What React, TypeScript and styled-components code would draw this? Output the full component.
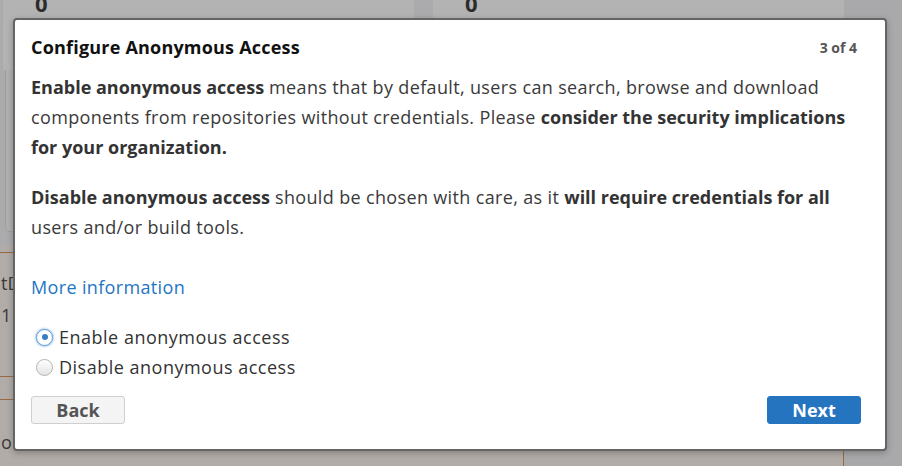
import styled, { createGlobalStyle } from 'styled-components';
import { useState } from 'react';

const GlobalStyle = createGlobalStyle`
  html, body {
    margin: 0;
    padding: 0;
    width: 902px;
    height: 466px;
    overflow: hidden;
  }
  body {
    font-family: "Open Sans", Lato, sans-serif;
    background: #a9a9ab;
  }
`;

const App = () => {
  const [anonymous, setAnonymous] = useState(true);

  return (
    <>
      <GlobalStyle />
      <Page>
        <Main>
          <TopArea>
            <StatRow>
              <StatCard>0</StatCard>
              <StatCard>0</StatCard>
            </StatRow>
            <OutlineCard />
          </TopArea>
          <TableArea>
            <TableRow height="124px">
              <Cell>tDate</Cell>
              <Cell>1</Cell>
            </TableRow>
            <TableRow height="23px" />
            <TableRow height="60px" last>
              <Cell>o</Cell>
            </TableRow>
          </TableArea>
        </Main>
        <SideStrip />
      </Page>

      <Modal>
        <Header>
          <Title>Configure Anonymous Access</Title>
          <Step>3 of 4</Step>
        </Header>
        <Body>
          <Paragraph>
            <b>Enable anonymous access</b> means that by default, users can
            search, browse and download components from repositories without
            credentials. Please{' '}
            <b>consider the security implications for your organization.</b>
          </Paragraph>
          <Paragraph gap="20px">
            <b>Disable anonymous access</b> should be chosen with care, as it{' '}
            <b>will require credentials for all</b> users and/or build tools.
          </Paragraph>
          <MoreLink href="#">More information</MoreLink>
          <RadioGroup>
            <RadioLabel>
              <RadioInput
                type="radio"
                name="anon"
                checked={anonymous}
                onChange={() => setAnonymous(true)}
              />
              Enable anonymous access
            </RadioLabel>
            <RadioLabel>
              <RadioInput
                type="radio"
                name="anon"
                checked={!anonymous}
                onChange={() => setAnonymous(false)}
              />
              Disable anonymous access
            </RadioLabel>
          </RadioGroup>
        </Body>
        <Footer>
          <Button>Back</Button>
          <Button primary>Next</Button>
        </Footer>
      </Modal>
    </>
  );
};

// 뒤 배경 (이미 어둡게 깔린 색)
const Page = styled.div`
  display: flex;
  width: 902px;
  height: 466px;
`;

const Main = styled.div`
  width: 844px;
  display: flex;
  flex-direction: column;
`;

const TopArea = styled.div`
  height: 245px;
  background: #ababad;
  padding-left: 3px;
  box-sizing: border-box;
`;

const StatRow = styled.div`
  display: flex;
  gap: 19px;
  height: 70px;
`;

const StatCard = styled.div`
  width: 411px;
  background: #b3b3b3;
  font-family: "Open Sans", sans-serif;
  font-weight: bold;
  font-size: 22px;
  color: #2b2b2b;
  line-height: 1;
  margin-top: -8px;
  padding-left: 32px;
  box-sizing: border-box;
`;

const OutlineCard = styled.div`
  margin: -29px 0 0 2px;
  height: 189px;
  width: 400px;
  border: 1px solid #9e9e9e;
  border-radius: 5px;
  background: #b0b0b0;
`;

const TableArea = styled.div`
  flex: 1;
  background: #b1aca8;
  padding-top: 7px;
  display: flex;
  flex-direction: column;
  border-right: 1px solid #9a6a3f;
`;

const TableRow = styled.div<{ height?: string; last?: boolean }>`
  height: ${({ height }) => height || '30px'};
  border-top: 1px solid #9a6a3f;
  display: flex;
  flex-direction: column;
  padding-top: 20px;
  box-sizing: border-box;
  gap: 12px;
  ${({ last }) => (last ? 'padding-top: 32px;' : '')}
`;

const Cell = styled.div`
  font-family: "Open Sans", sans-serif;
  font-size: 18px;
  color: #3a3a3a;
  line-height: 20px;
  padding-left: 1px;
`;

const SideStrip = styled.div`
  flex: 1;
  background: #a9a9ab;
`;

// 모달
const Modal = styled.div`
  position: absolute;
  left: 13px;
  top: 18px;
  width: 874px;
  height: 433px;
  box-sizing: border-box;
  background: #fff;
  border: 2px solid #656565;
  border-radius: 4px;
  box-shadow: 0 2px 6px rgba(0, 0, 0, 0.25);
  padding: 14px 24px 0 16px;
  display: flex;
  flex-direction: column;
  color: #333;
  letter-spacing: 0.35px;
`;

const Header = styled.div`
  display: flex;
  align-items: center;
  justify-content: space-between;
  height: 26px;
`;

const Title = styled.h1`
  margin: 0;
  font-size: 18px;
  font-weight: bold;
  color: #111;
  line-height: 26px;
  letter-spacing: 0.2px;
`;

const Step = styled.span`
  font-size: 14px;
  font-weight: bold;
  color: #555;
  margin-right: 4px;
  letter-spacing: 0;
`;

const Body = styled.div`
  display: flex;
  flex-direction: column;
  margin-top: 12px;
`;

const Paragraph = styled.p<{ gap?: string }>`
  margin: ${({ gap }) => gap || '0'} 0 0 0;
  font-size: 18px;
  line-height: 30px;
  color: #3a3a3a;
  b {
    color: #333;
    letter-spacing: 0;
  }
`;

const MoreLink = styled.a`
  margin-top: 30px;
  font-size: 18px;
  line-height: 30px;
  color: #2476c3;
  text-decoration: none;
  align-self: flex-start;
`;

const RadioGroup = styled.div`
  display: flex;
  flex-direction: column;
  margin-top: 20px;
`;

const RadioLabel = styled.label`
  display: flex;
  align-items: center;
  gap: 6px;
  font-size: 18px;
  line-height: 30px;
  color: #333;
  padding-left: 5px;
  letter-spacing: 0.5px;
`;

const RadioInput = styled.input`
  appearance: none;
  margin: 0;
  width: 17px;
  height: 17px;
  border-radius: 50%;
  border: 1px solid #b4b4b4;
  background: linear-gradient(#ffffff, #e4e4e4);
  box-sizing: border-box;
  position: relative;

  &:checked {
    border-color: #5b9ad8;
    background: #fff;
    box-shadow: 0 0 2px 1px rgba(91, 154, 216, 0.45);
  }
  &:checked::after {
    content: '';
    position: absolute;
    left: 4.5px;
    top: 4.5px;
    width: 6px;
    height: 6px;
    border-radius: 50%;
    background: #3a7cc4;
  }
`;

const Footer = styled.div`
  display: flex;
  justify-content: space-between;
  margin-top: 14px;
`;

const Button = styled.button<{ primary?: boolean }>`
  width: 94px;
  height: 28px;
  border-radius: 3px;
  font-family: "Open Sans", sans-serif;
  font-size: 18px;
  font-weight: bold;
  cursor: pointer;
  border: 1px solid ${({ primary }) => (primary ? '#2474c0' : '#cfcfcf')};
  background: ${({ primary }) => (primary ? '#2474c0' : '#f4f4f4')};
  color: ${({ primary }) => (primary ? '#fff' : '#555')};
  padding: 0;
`;

export default App;
